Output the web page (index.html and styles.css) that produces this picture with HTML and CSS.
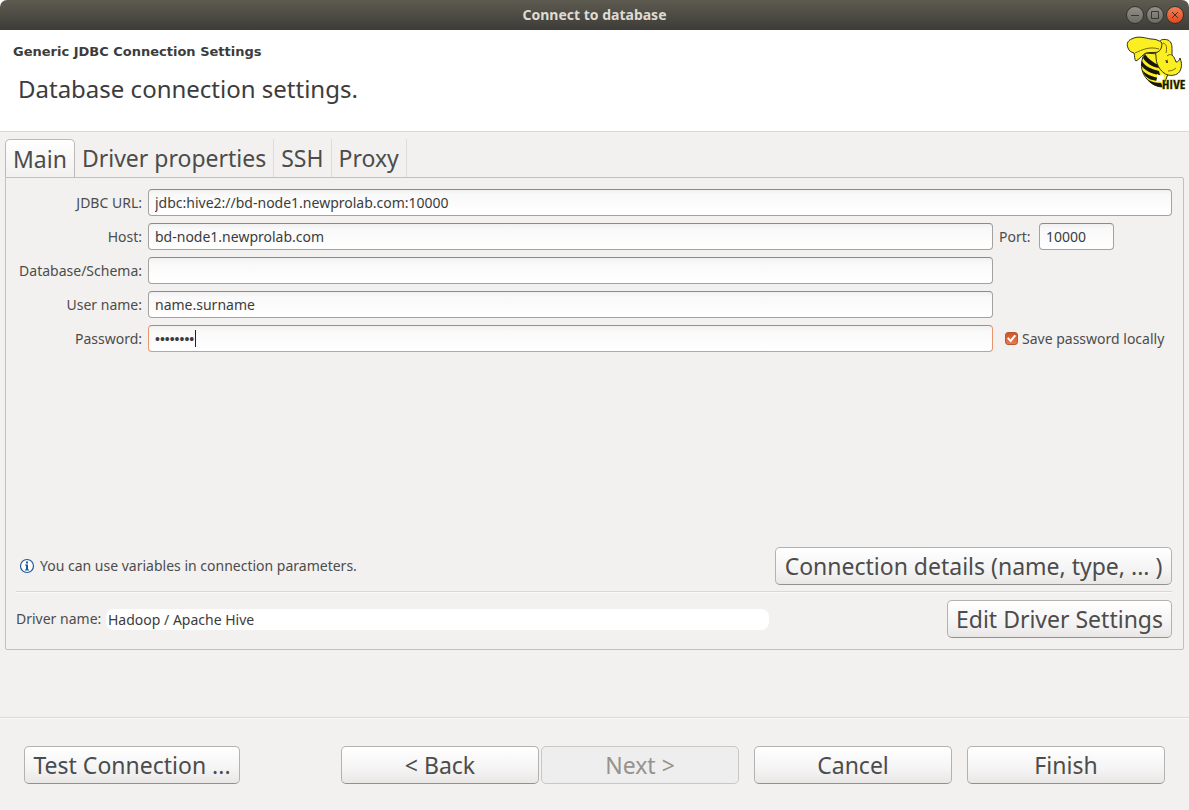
FILE: index.html
```
<!DOCTYPE html>
<html lang="en">
<head>
<meta charset="utf-8">
<title>Connect to database</title>
<link rel="stylesheet" href="styles.css">
</head>
<body>
<form class="window">
  <header class="titlebar">
    <h1 class="window-title">Connect to database</h1>
    <div class="window-controls">
      <button type="button" class="control" aria-label="Minimize"><svg viewBox="0 0 16 16"><path d="M4 8.500h8"/></svg></button>
      <button type="button" class="control" aria-label="Maximize"><svg viewBox="0 0 16 16"><path d="M4.500 4.500h7v7h-7z"/></svg></button>
      <button type="button" class="control control-close" aria-label="Close"><svg viewBox="0 0 16 16"><path d="M5 5l6 6M11 5l-6 6"/></svg></button>
    </div>
  </header>

  <section class="banner">
    <div class="banner-text">
      <h2 class="banner-title">Generic JDBC Connection Settings</h2>
      <p class="banner-message">Database connection settings.</p>
    </div>
    <svg class="hive-logo" viewBox="0 0 64 60" role="img" aria-label="Hive">
      <path class="bee" d="M20 21C16 27 15 36 19 43c4 7 11 12 19 12l5-13-10-20z"/>
      <path class="stripe" d="M17 29c3 6 10 8 17 10l1 4c-9-1-16-5-19-10zM17 38c5 5 11 7 17 8l1 3c-7 0-13-2-16-7zM20 22c3 5 8 8 13 11l1 3c-7-1-13-5-16-10zM22 47c5 3 9 4 14 4l2 4c-7 0-12-3-16-8z"/>
      <path class="bee" d="M31 24c-1-5 1-10 3-14 2-3 5-3 9-2 4 2 4 6 4 10v5c2 2 3 4 4 7 2 0 3-1 4-4 3 7 1 14-3 16-4 2-9 2-13-1-5-4-8-9-8-17z"/>
      <path class="bee" d="M3 16c-2-5 0-8 6-10 5-2 11 0 17 1 4 0 8 1 11 4 0 4-1 7-4 9-4 1-8 0-12 1-3 1-6 6-10 8-2-2-1-5-2-8-3-1-5-2-6-5z"/>
      <path class="bee-line" d="M10 21c7-3 14-7 24-4M38 11c4 1 4 5 3 10M43 39c3 0 6-1 8-3"/>
      <path class="bee-line" d="M40 29l3-1M47 23c-2-1-4 0-5 1"/>
      <circle class="stripe" cx="42" cy="30" r="1"/>
      <path class="wing" d="M32 42l3 2 3-2 1 3-1 4 1 3-4-3-4 1 1-4z"/>
      <text class="hive-word" x="37" y="57">HIVE</text>
    </svg>
  </section>

  <main class="content">
    <nav class="tabs" role="tablist">
      <button type="button" role="tab" aria-selected="true" class="tab tab-active">Main</button>
      <button type="button" role="tab" class="tab">Driver properties</button>
      <button type="button" role="tab" class="tab">SSH</button>
      <button type="button" role="tab" class="tab">Proxy</button>
    </nav>

    <section class="panel" role="tabpanel">
      <div class="fields">
        <label class="label" for="url">JDBC URL:</label>
        <input class="entry entry-wide" id="url" type="text" value="jdbc:hive2://bd-node1.newprolab.com:10000">

        <label class="label" for="host">Host:</label>
        <input class="entry" id="host" type="text" value="bd-node1.newprolab.com">
        <div class="side">
          <label class="port-label" for="port">Port:</label>
          <input class="entry entry-port" id="port" type="text" value="10000">
        </div>

        <label class="label" for="schema">Database/Schema:</label>
        <input class="entry" id="schema" type="text">

        <label class="label" for="user">User name:</label>
        <input class="entry" id="user" type="text" value="name.surname">

        <label class="label" for="password">Password:</label>
        <div class="entry entry-focused">
          <input class="password" id="password" type="password" size="8" value="password">
          <span class="caret"></span>
        </div>
        <div class="side side-check">
          <input class="check" id="save" type="checkbox" checked>
          <label for="save">Save password locally</label>
        </div>
      </div>

      <div class="row hint-row">
        <p class="hint">
          <svg class="info" viewBox="0 0 16 16" aria-hidden="true"><circle cx="8" cy="8" r="6.500"/><path d="M7 3.500h2v2H7zM6 6.500h3v5h1v1H6v-1h1v-4H6z"/></svg>
          You can use variables in connection parameters.
        </p>
        <button type="button" class="button button-details">Connection details (name, type, ... )</button>
      </div>
      <hr class="rule">
      <div class="row">
        <label class="driver-label" for="driver">Driver name:</label>
        <input class="driver" id="driver" type="text" readonly value="Hadoop / Apache Hive">
        <button type="button" class="button button-driver">Edit Driver Settings</button>
      </div>
    </section>
  </main>

  <footer class="actions">
    <button type="button" class="button button-test">Test Connection ...</button>
    <div class="action-group">
      <div class="pager">
        <button type="button" class="button button-action">&lt; Back</button>
        <button type="button" class="button button-action" disabled>Next &gt;</button>
      </div>
      <button type="button" class="button button-action">Cancel</button>
      <button type="submit" class="button button-action">Finish</button>
    </div>
  </footer>
</form>
</body>
</html>
```
FILE: styles.css
```
* { box-sizing: border-box; }

body {
  margin: 0;
  background: #fff;
  color: #4c4c4c;
  font: 14px/20px "Noto Sans", "Open Sans", sans-serif;
}

button, input { font: inherit; color: inherit; margin: 0; }
h1, h2, p { margin: 0; }

.window {
  display: flex;
  flex-direction: column;
  min-height: 100vh;
  background: linear-gradient(#fff 30px, #f2f1ef 30px);
}

.titlebar {
  display: grid;
  grid-template-columns: 1fr auto 1fr;
  align-items: center;
  height: 30px;
  padding: 0 5px;
  background: linear-gradient(#5d5a50, #57554b 20%, #3d3c38);
  border-radius: 7px 7px 0 0;
}
.window-title {
  grid-column: 2;
  color: #dfdbd2;
  font-size: 14px;
  line-height: 20px;
  font-weight: 700;
}
.window-controls { display: flex; justify-content: flex-end; gap: 2px; }
.control {
  width: 18px;
  height: 18px;
  padding: 0;
  border: 1px solid #34332e;
  border-radius: 50%;
  background: linear-gradient(#929087, #6c6a62);
}
.control-close { background: linear-gradient(#f58058, #e0491c); }
.control svg { display: block; width: 16px; height: 16px; fill: none; stroke: #383731; stroke-width: 1; }

.banner {
  display: flex;
  justify-content: space-between;
  min-height: 102px;
  padding: 2px 0 0 13px;
  background: #fff;
  border-bottom: 1px solid #d9d8d6;
  color: #3c3c3c;
}
.banner-title {
  padding-top: 10px;
  font: 700 13px/20px "DejaVu Sans", sans-serif;
}
.banner-message { padding: 11px 0 0 5px; font-size: 24px; line-height: 32px; }
.hive-logo { width: 64px; height: 60px; }
.bee { fill: #fcef21; stroke: #302e16; stroke-width: 1; stroke-linejoin: round; }
.stripe { fill: #17160d; }
.wing { fill: #fff; }
.bee-line { fill: none; stroke: #71690f; stroke-width: 1; }
.hive-word {
  font: 700 13px "Liberation Sans Narrow", "Open Sans Condensed", "Liberation Sans", sans-serif;
  fill: #17160d;
  stroke: #d8cc25;
  stroke-width: 1;
  paint-order: stroke;
}

.content { flex: 1; padding: 7px 5px 0; }

.tabs { display: flex; height: 38px; }
.tab {
  padding: 0 7px;
  border: 0;
  border-right: 1px solid #dddcd9;
  background: none;
  font-size: 23px;
  line-height: 36px;
  white-space: nowrap;
}
.tab-active {
  border: 1px solid #bbbab8;
  border-bottom: 0;
  border-radius: 5px 5px 0 0;
  background: linear-gradient(#fff, #f2f1ef);
}

.panel {
  display: flex;
  flex-direction: column;
  min-height: 473px;
  padding: 11px 11px 11px 10px;
  border: 1px solid #c1c0be;
  border-radius: 0 2px 2px 2px;
}

.fields {
  display: grid;
  grid-template-columns: 126px 1fr 173px;
  gap: 7px 6px;
  align-items: center;
}
.label { grid-column: 1; text-align: right; white-space: nowrap; }
.entry {
  grid-column: 2;
  width: 100%;
  height: 27px;
  padding: 0 6px;
  border: 1px solid #a3a2a0;
  border-top-color: #8b8a88;
  border-radius: 4px;
  background: linear-gradient(#f1f1f1, #f9f9f9 20%, #fff);
  color: #3c3c3c;
}
.entry-wide { grid-column: 2 / 4; }
.entry-port { width: 75px; }
.port-label { width: 34px; }
.side { display: flex; align-items: center; gap: 6px; white-space: nowrap; }
.side-check { gap: 4px; padding-left: 6px; }
.entry-focused { display: flex; align-items: center; border-color: #e9966f; border-top-color: #df7a4d; }
.password {
  width: 40px;
  padding: 0;
  border: 0;
  outline: 0;
  background: none;
  font: 14px/20px "Liberation Sans", sans-serif;
}
.caret { width: 1px; height: 17px; background: #222; }
.check {
  appearance: none;
  display: grid;
  place-items: center;
  width: 13px;
  height: 13px;
  border: 1px solid #b75732;
  border-radius: 3px;
  background: linear-gradient(#ce5526, #e57b52);
}
.check::before {
  content: "";
  width: 9px;
  height: 8px;
  background: #fff;
  clip-path: polygon(0 50%, 18% 35%, 38% 62%, 85% 0, 100% 18%, 42% 100%);
}

.row { display: flex; align-items: center; }
.hint-row { justify-content: space-between; margin-top: auto; }
.hint { display: flex; align-items: center; gap: 5px; padding-left: 3px; }
.info { width: 16px; height: 16px; fill: #1c5a9c; }
.info circle { fill: #fff; stroke: #1c5a9c; stroke-width: 1.200; }
.rule {
  width: 100%;
  height: 2px;
  margin: 6px 0 7px;
  border: 0;
  border-top: 1px solid #d9d8d6;
  background: #fafafa;
}
.driver-label { width: 90px; white-space: nowrap; }
.driver {
  width: 663px;
  height: 21px;
  padding: 0 2px;
  border: 0;
  border-radius: 8px;
  background: #fff;
  color: #3c3c3c;
}

.button {
  height: 38px;
  padding: 0 5px;
  border: 1px solid #b3b2b0;
  border-bottom-color: #929190;
  border-radius: 5px;
  background: linear-gradient(#fff, #f5f4f4 60%, #e9e7e6);
  font-size: 23px;
  line-height: 32px;
  white-space: nowrap;
}
.button:disabled { border-color: #c9c8c6; background: #eee; color: #96928c; }
.button-details { min-width: 397px; }
.button-driver { min-width: 225px; margin-left: auto; }
.button-test { min-width: 216px; }
.button-action { width: 198px; }

.actions {
  display: flex;
  justify-content: space-between;
  padding: 28px 24px 26px;
  border-top: 1px solid #d9d8d6;
  box-shadow: inset 0 1px #fafafa;
}
.action-group { display: flex; gap: 15px; }
.pager { display: flex; gap: 2px; }
```
